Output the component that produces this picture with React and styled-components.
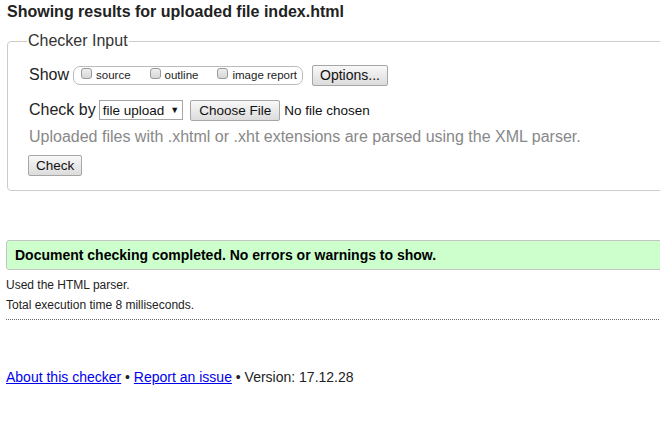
import React from "react";
import styled, { createGlobalStyle } from "styled-components";

const Global = createGlobalStyle`
  html, body { margin: 0; padding: 0; overflow: hidden; background: #fff; }
  body { font-family: "Liberation Sans", Arial, sans-serif; color: #000; }
`;

const Page = styled.div`
  width: 720px;
  padding: 3px 0 0 7px;
`;

const Title = styled.h2`
  margin: 0;
  font-size: 16px;
  font-weight: bold;
  color: #222;
  line-height: 18px;
`;

const Fieldset = styled.fieldset`
  margin: 11px 0 0 0;
  padding: 14px 21px 14px 21px;
  border: 1px solid #ccc;
  border-radius: 4px;
  min-width: 0;
`;

const Legend = styled.legend`
  font-size: 16px;
  color: #333;
  padding: 0 1px;
  margin-left: -2px;
`;

const Row = styled.div`
  display: flex;
  align-items: center;
  font-size: 16px;
  color: #222;
  height: 22px;
  margin-bottom: ${(p) => p.$mb || 0}px;
`;

const Label = styled.span`
  margin-right: ${(p) => p.$mr || 4}px;
`;

const Group = styled.span`
  display: inline-flex;
  align-items: center;
  border: 1px solid #bbb;
  border-radius: 7px;
  height: 17px;
  padding: 0 5px 0 6px;
  font-size: 11.5px;
  color: #222;
`;

const Opt = styled.label`
  display: inline-flex;
  align-items: center;
  margin-right: ${(p) => p.$mr || 0}px;
`;

const Box = styled.input.attrs({ type: "checkbox" })`
  appearance: none;
  width: 11px;
  height: 11px;
  margin: 0 4px 3px 1px;
  border: 1px solid #999;
  border-radius: 3px;
  background: linear-gradient(#eee, #d6d6d6);
`;

const Button = styled.button`
  font-family: "Liberation Sans", Arial, sans-serif;
  font-size: ${(p) => p.$fs || 13.5}px;
  color: #111;
  background: linear-gradient(#f8f8f8, #dcdcdc);
  border: 1px solid #a6a6a6;
  border-radius: 2px;
  height: ${(p) => p.$h || 21}px;
  padding: 0 ${(p) => p.$px || 6}px;
  margin-left: ${(p) => p.$ml || 0}px;
  display: inline-flex;
  align-items: center;
`;

const Select = styled.span`
  display: inline-flex;
  align-items: center;
  height: 18px;
  border: 1px solid #a6a6a6;
  background: #fff;
  font-size: 13.5px;
  padding: 0 3px 0 3px;
  color: #111;
`;

const Arrow = styled.span`
  font-size: 9px;
  margin-left: 6px;
`;

const Muted = styled.p`
  margin: 0 0 7px 0;
  font-size: 16px;
  color: #888;
  line-height: 22px;
`;

const FileName = styled.span`
  font-size: 13.5px;
  margin-left: 4px;
  color: #111;
`;

const Success = styled.div`
  margin: 49px 0 0 -1px;
  height: 28px;
  display: flex;
  align-items: center;
  padding-left: 8px;
  background: #ccffcc;
  border: 1px solid #c4c4c4;
  border-radius: 3px;
  font-size: 14px;
  font-weight: bold;
  color: #000;
`;

const Small = styled.p`
  margin: 0;
  margin-left: -1px;
  font-size: 12px;
  line-height: 20px;
  color: #222;
`;

const Info = styled.div`
  padding-top: 5px;
`;

const Rule = styled.hr`
  margin: 4px 0 0 -1px;
  border: 0;
  border-top: 1px dotted #666;
`;

const Footer = styled.p`
  margin: 49px 0 0 -1px;
  font-size: 14px;
  color: #222;
`;

const Link = styled.a`
  color: #0000ee;
  text-decoration: underline;
`;

export default function App() {
  return (
    <>
      <Global />
      <Page>
        <Title>Showing results for uploaded file index.html</Title>
        <Fieldset>
          <Legend>Checker Input</Legend>
          <Row $mb={13}>
            <Label $mr={4}>Show</Label>
            <Group>
              <Opt $mr={18}><Box />source</Opt>
              <Opt $mr={18}><Box />outline</Opt>
              <Opt><Box />image report</Opt>
            </Group>
            <Button $ml={9} $fs={14} $px={7}>Options...</Button>
          </Row>
          <Row $mb={5}>
            <Label $mr={3}>Check by</Label>
            <Select>file upload<Arrow>▼</Arrow></Select>
            <Button $ml={7} $px={8}>Choose File</Button>
            <FileName>No file chosen</FileName>
          </Row>
          <Muted>Uploaded files with .xhtml or .xht extensions are parsed using the XML parser.</Muted>
          <Button $ml={-1} $px={7}>Check</Button>
        </Fieldset>
        <Success>Document checking completed. No errors or warnings to show.</Success>
        <Info>
          <Small>Used the HTML parser.</Small>
          <Small>Total execution time 8 milliseconds.</Small>
        </Info>
        <Rule />
        <Footer>
          <Link href="#">About this checker</Link> • <Link href="#">Report an issue</Link> • Version: 17.12.28
        </Footer>
      </Page>
    </>
  );
}
